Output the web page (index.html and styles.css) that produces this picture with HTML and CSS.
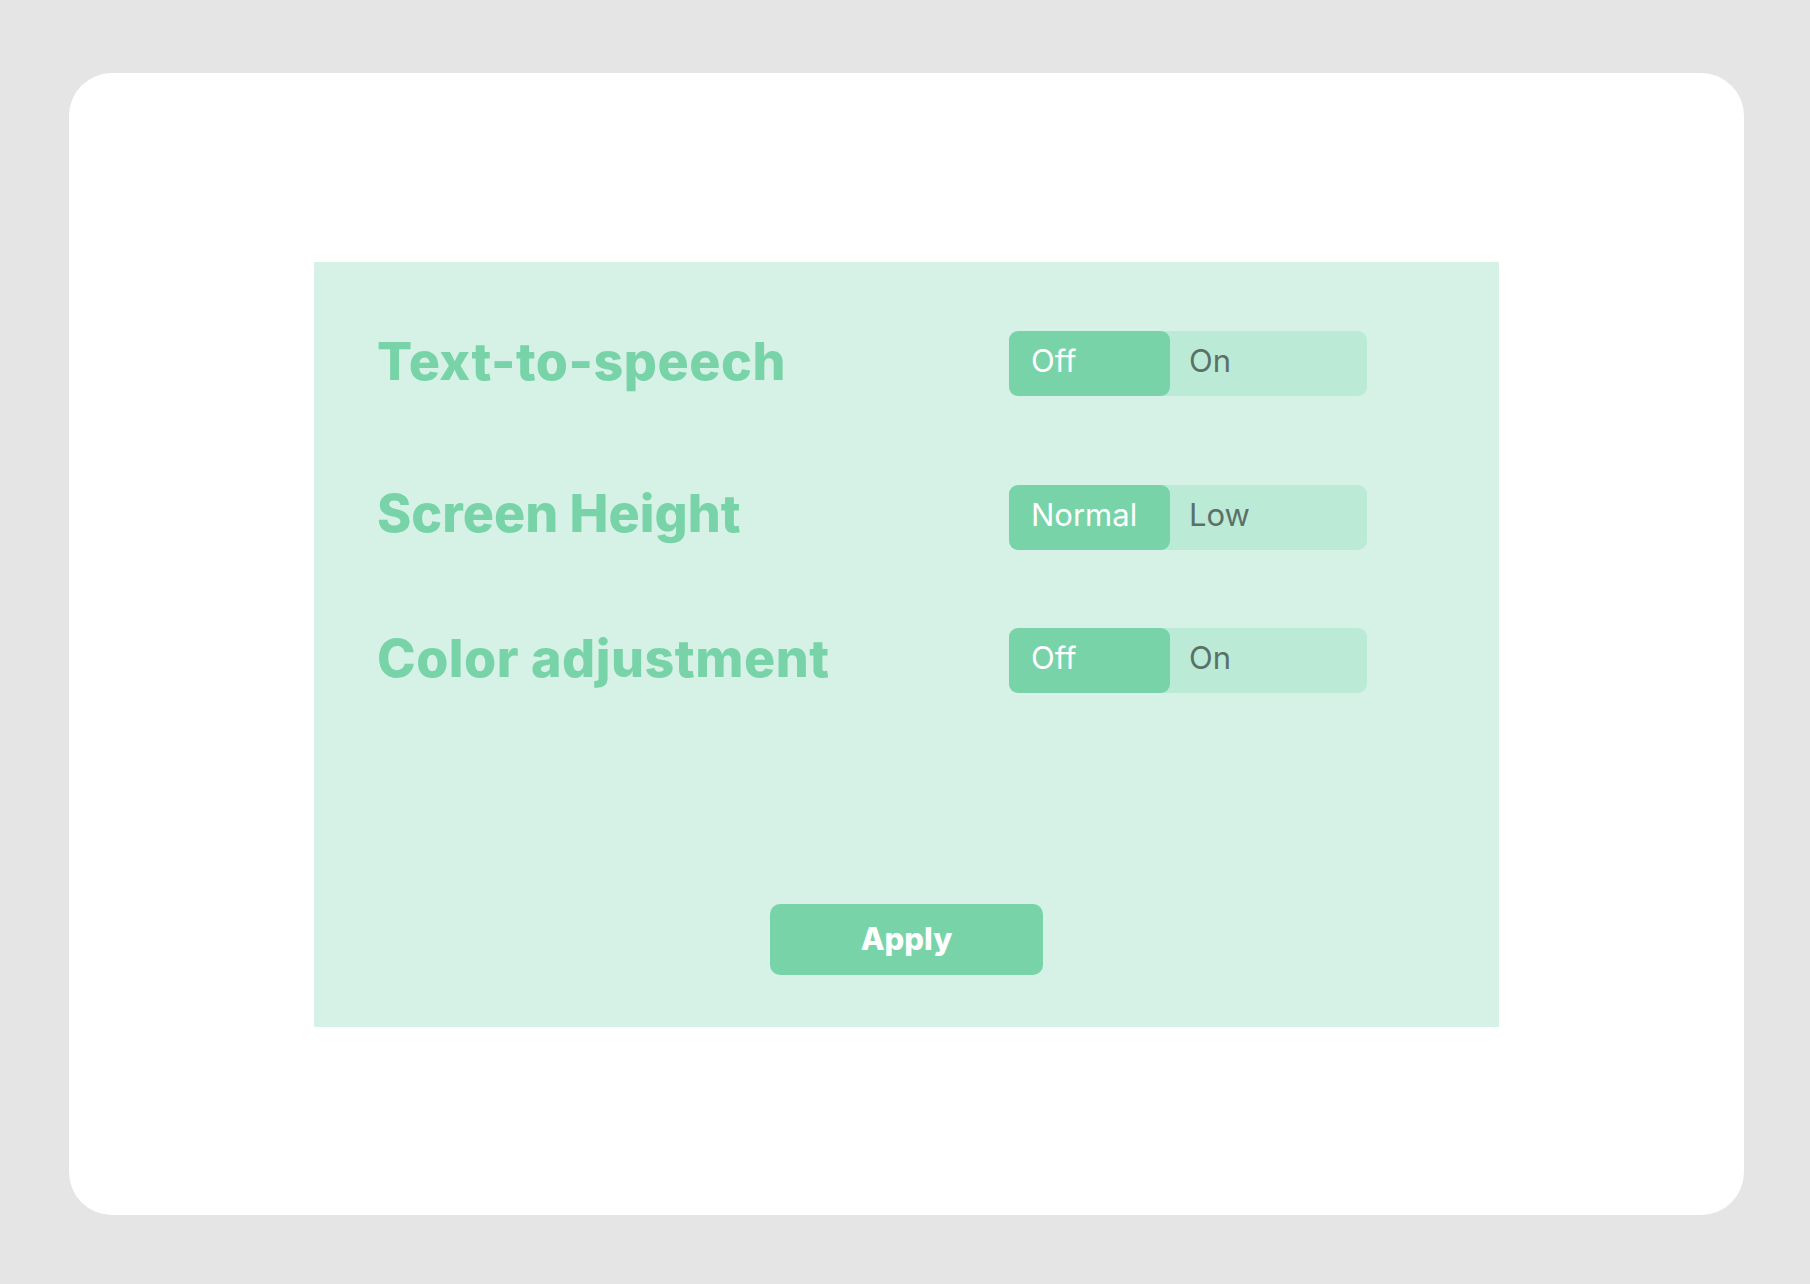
FILE: index.html
```html
<!DOCTYPE html>
<html lang="en">
<head>
<meta charset="utf-8">
<title>Settings</title>
<link rel="stylesheet" href="styles.css">
</head>
<body>
<div class="frame">
  <section class="panel">
    <div class="settings">
      <div class="row row-1">
        <div class="label">Text-to-speech</div>
        <div class="toggle">
          <span class="seg seg-active">Off</span>
          <span class="seg">On</span>
        </div>
      </div>
      <div class="row row-2">
        <div class="label">Screen Height</div>
        <div class="toggle">
          <span class="seg seg-active">Normal</span>
          <span class="seg">Low</span>
        </div>
      </div>
      <div class="row row-3">
        <div class="label">Color adjustment</div>
        <div class="toggle">
          <span class="seg seg-active">Off</span>
          <span class="seg">On</span>
        </div>
      </div>
    </div>
    <div class="actions">
      <button class="apply">Apply</button>
    </div>
  </section>
</div>
</body>
</html>
```

FILE: styles.css
```css
* { box-sizing: border-box; }
html, body { margin: 0; padding: 0; }
body {
  background: #e5e5e5;
  width: 1810px;
  height: 1284px;
  padding: 73px 66px 69px 69px;
  font-family: Inter, "Liberation Sans", sans-serif;
}
.frame {
  width: 1675px;
  height: 1142px;
  background: #ffffff;
  border-radius: 43px;
  display: flex;
  align-items: center;
  justify-content: center;
}
.panel {
  width: 1185px;
  height: 765px;
  background: #d6f2e6;
  padding: 69px 132px 52px 63px;
  display: flex;
  flex-direction: column;
}
.settings {
  display: flex;
  flex-direction: column;
}
.row {
  display: grid;
  grid-template-columns: 632px 358px;
  align-items: center;
  height: 65px;
}
.row-2 { margin-top: 89px; }
.row-3 { margin-top: 78px; }
.label {
  font-size: 52px;
  line-height: 56px;
  font-weight: 800;
  color: #78d4a8;
  letter-spacing: 0.5px;
  white-space: nowrap;
  padding-bottom: 2px;
}
.row-2 .label { padding-bottom: 6px; letter-spacing: 0; }
.toggle {
  display: flex;
  height: 65px;
  background: #bbebd7;
  border-radius: 9px;
}
.seg {
  display: flex;
  align-items: center;
  padding-left: 19px;
  padding-bottom: 6px;
  font-size: 31px;
  color: #5b7168;
  flex: 1;
}
.seg-active {
  flex: 0 0 161px;
  background: #78d4a8;
  color: #ffffff;
  border-radius: 9px;
  padding-left: 22px;
}
.actions {
  margin-top: auto;
  display: flex;
  justify-content: center;
  padding-left: 69px;
}
.apply {
  width: 273px;
  height: 71px;
  border: none;
  border-radius: 10px;
  background: #78d4a8;
  color: #ffffff;
  font-family: Inter, "Liberation Sans", sans-serif;
  font-size: 31px;
  font-weight: 800;
  padding-bottom: 3px;
  cursor: pointer;
}
```
